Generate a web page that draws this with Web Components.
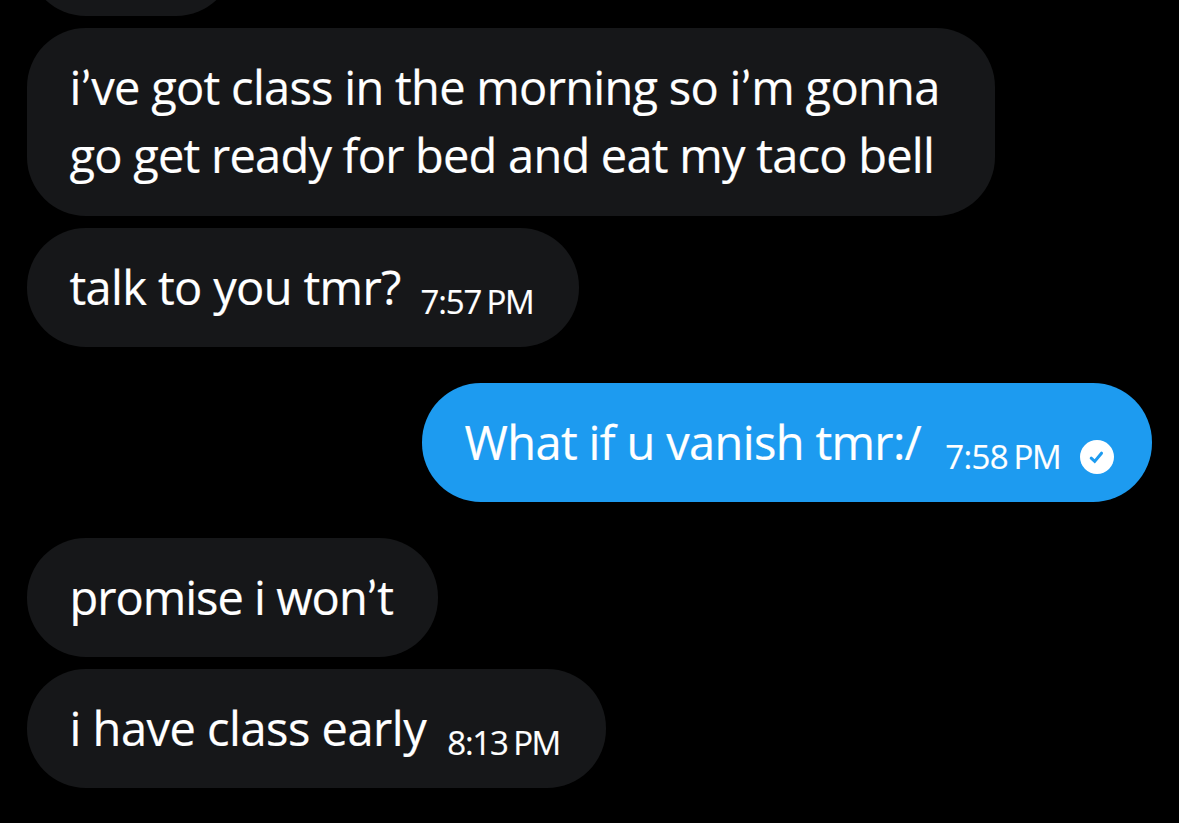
<!DOCTYPE html>
<html lang="en">
<head>
<meta charset="utf-8">
<title>Messages</title>
<style>
body {
  margin: 0;
  background: #000;
  overflow: hidden;
}

/* rounder apostrophes, with a little air round them */
.apos {
  font-family: Lato, sans-serif;
  line-height: 1;
  letter-spacing: 0.6px;
}
</style>
</head>
<body>

<chat-thread>
  <chat-bubble style="--width: 208px"></chat-bubble>
  <chat-bubble style="--width: 968px; --height: 187.4px">
    <chat-line style="--tracking: -0.72px">i<span class="apos">’</span>ve got class in the morning so i<span class="apos">’</span>m gonna</chat-line>
    <chat-line style="--tracking: -0.77px">go get ready for bed and eat my taco bell</chat-line>
  </chat-bubble>
  <chat-bubble style="--width: 552px">
    <chat-line style="--tracking: -0.65px">talk to you tmr?</chat-line>
    <chat-time slot="meta" clock="7:57" period="PM"></chat-time>
  </chat-bubble>
  <chat-bubble class="turn" sent style="--width: 730px; --meta-gap: 24px">
    <chat-line style="--tracking: -0.65px">What if u vanish tmr:/</chat-line>
    <chat-time slot="meta" clock="7:58" period="PM" style="--tracking: -0.6px"></chat-time>
    <sent-badge slot="meta"></sent-badge>
  </chat-bubble>
  <chat-bubble class="turn" style="--width: 411px">
    <chat-line style="--tracking: -1px">promise i won<span class="apos">’</span>t</chat-line>
  </chat-bubble>
  <chat-bubble style="--width: 579px; --meta-gap: 21px">
    <chat-line style="--tracking: -0.5px">i have class early</chat-line>
    <chat-time slot="meta" clock="8:13" period="PM"></chat-time>
  </chat-bubble>
</chat-thread>

<script>
function define (name, html) {
  const template = document.createElement('template')
  template.innerHTML = html

  customElements.define(name, class extends HTMLElement {
    constructor () {
      super()
      this.attachShadow({ mode: 'open' })
        .appendChild(template.content.cloneNode(true))
    }

    connectedCallback () {
      // Copy attributes into the parts that show them.
      this.shadowRoot.querySelectorAll('[data-attr]').forEach(el => {
        el.textContent = this.getAttribute(el.dataset.attr)
      })
    }
  })
}

define('chat-thread', `
<style>
:host {
  display: flex;
  flex-direction: column;
  align-items: flex-start;
  box-sizing: border-box;
  width: 1179px;
  height: 823px;
  padding: 0 27px;
  overflow: hidden;
  background: #000;
  color: #fff;
  font-family: "Open Sans", sans-serif;
  -webkit-text-stroke: 0.2px;
}
::slotted(*) {
  margin-bottom: 12.6px;
}
/* the oldest message is scrolled mostly out of view */
::slotted(:first-child) {
  margin-top: -102.8px;
}
::slotted(.turn) {
  margin-top: 24px;
}
</style>
<slot></slot>
`)

define('chat-bubble', `
<style>
:host {
  display: flex;
  align-items: flex-start;
  flex: none;
  box-sizing: border-box;
  width: var(--width);
  height: var(--height, 118.4px);
  padding: 24.8px 0 0 42.5px;
  border-radius: 59px;
  background: #161719;
}
:host([sent]) {
  align-self: flex-end;
  background: #1d9bf0;
}
.meta {
  display: flex;
  align-items: center;
  gap: 19.5px;
  height: 34px;
  padding-top: 32.2px;
  margin-left: var(--meta-gap, 20px);
}
</style>
<div><slot></slot></div>
<div class="meta"><slot name="meta"></slot></div>
`)

define('chat-line', `
<style>
:host {
  display: block;
  width: max-content;
  height: 68px;
  font-size: 47px;
  line-height: 68px;
  letter-spacing: var(--tracking);
  white-space: nowrap;
}
</style>
<slot></slot>
`)

define('chat-time', `
<style>
:host {
  display: flex;
  gap: 5.5px;
  font-size: 33px;
  line-height: 34px;
  letter-spacing: var(--tracking, -1.2px);
  white-space: nowrap;
}
span + span {
  letter-spacing: -1.5px;
}
</style>
<span data-attr="clock"></span><span data-attr="period"></span>
`)

define('sent-badge', `
<style>
:host {
  display: block;
  width: 34px;
  height: 34px;
}
svg {
  display: block;
}
</style>
<svg width="34" height="34" viewBox="0 0 34 34">
  <circle cx="17" cy="17" r="17" fill="#fff"/>
  <path d="M11.2 18.2l3.5 3.2 6.8-8.2" fill="none" stroke="#1d9bf0" stroke-width="3" stroke-linecap="round"/>
</svg>
`)
</script>
</body>
</html>
